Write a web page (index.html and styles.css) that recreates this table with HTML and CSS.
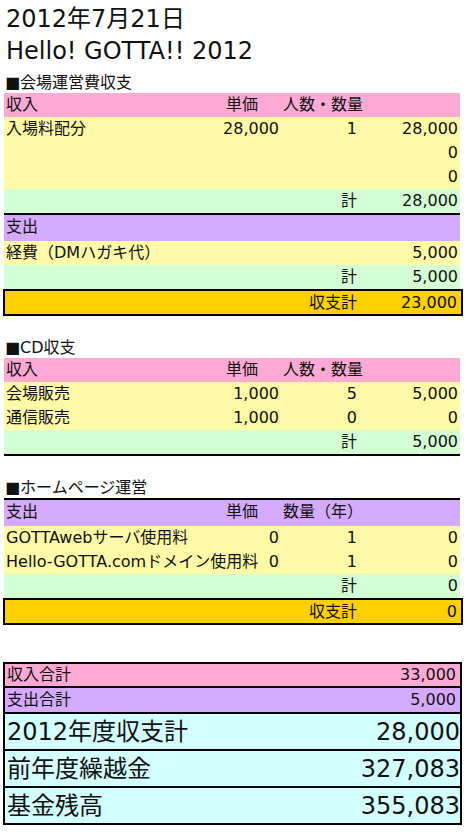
FILE: index.html
```html
<!DOCTYPE html>
<html lang="ja">
<head>
  <meta charset="UTF-8">
  <title>Hello! GOTTA!! 2012 収支報告</title>
  <link rel="stylesheet" href="styles.css">
</head>
<body>
  <div class="page">
    <div class="title">2012年7月21日</div>
    <div class="title">Hello! GOTTA!! 2012</div>

    <!-- 会場運営費 -->
    <h2 class="sheet-name first">■会場運営費収支</h2>
    <div class="sheet">
      <div class="row income">
        <span>収入</span><span class="price-head">単価</span><span>人数・数量</span><span></span>
      </div>
      <div class="row item">
        <span>入場料配分</span><span class="num">28,000</span><span class="num">1</span><span class="num">28,000</span>
      </div>
      <div class="row item">
        <span></span><span></span><span></span><span class="num">0</span>
      </div>
      <div class="row item">
        <span></span><span></span><span></span><span class="num">0</span>
      </div>
      <div class="row subtotal">
        <span></span><span></span><span class="num">計</span><span class="num">28,000</span>
      </div>
      <div class="row expense ruled">
        <span>支出</span><span></span><span></span><span></span>
      </div>
      <div class="row item">
        <span>経費（DMハガキ代）</span><span></span><span></span><span class="num">5,000</span>
      </div>
      <div class="row subtotal">
        <span></span><span></span><span class="num">計</span><span class="num">5,000</span>
      </div>
      <div class="row balance">
        <span></span><span></span><span class="num">収支計</span><span class="num">23,000</span>
      </div>
    </div>

    <!-- CD -->
    <h2 class="sheet-name">■CD収支</h2>
    <div class="sheet closed">
      <div class="row income">
        <span>収入</span><span class="price-head">単価</span><span>人数・数量</span><span></span>
      </div>
      <div class="row item">
        <span>会場販売</span><span class="num">1,000</span><span class="num">5</span><span class="num">5,000</span>
      </div>
      <div class="row item">
        <span>通信販売</span><span class="num">1,000</span><span class="num">0</span><span class="num">0</span>
      </div>
      <div class="row subtotal">
        <span></span><span></span><span class="num">計</span><span class="num">5,000</span>
      </div>
    </div>

    <!-- ホームページ -->
    <h2 class="sheet-name">■ホームページ運営</h2>
    <div class="sheet">
      <div class="row expense ruled">
        <span>支出</span><span class="price-head">単価</span><span>数量（年）</span><span></span>
      </div>
      <div class="row item">
        <span>GOTTAwebサーバ使用料</span><span class="num">0</span><span class="num">1</span><span class="num">0</span>
      </div>
      <div class="row item">
        <span>Hello-GOTTA.comドメイン使用料</span><span class="num">0</span><span class="num">1</span><span class="num">0</span>
      </div>
      <div class="row subtotal">
        <span></span><span></span><span class="num">計</span><span class="num">0</span>
      </div>
      <div class="row balance">
        <span></span><span></span><span class="num">収支計</span><span class="num">0</span>
      </div>
    </div>

    <!-- 合計 -->
    <div class="summary">
      <div class="sum-row income"><span>収入合計</span><span>33,000</span></div>
      <div class="sum-row expense"><span>支出合計</span><span>5,000</span></div>
      <div class="sum-row total"><span>2012年度収支計</span><span>28,000</span></div>
      <div class="sum-row total"><span>前年度繰越金</span><span>327,083</span></div>
      <div class="sum-row total"><span>基金残高</span><span>355,083</span></div>
    </div>
  </div>
</body>
</html>
```

FILE: styles.css
```css
body {
  margin: 0;
  background: #fff;
  color: #111;
  font-family: "DejaVu Sans", "Noto Sans CJK JP", sans-serif;
}
.page {
  width: 467px;
  padding-top: 3px;
}
.title {
  font-size: 24px;
  line-height: 32px;
  padding-left: 6px;
  white-space: nowrap;
}
.sheet-name {
  margin: 22px 0 0;
  padding-left: 5px;
  height: 20px;
  font-size: 16px;
  font-weight: normal;
  line-height: 20px;
}
.sheet-name.first {
  margin-top: 6px;
}
.sheet {
  margin-left: 4px;
  width: 456px;
}
.sheet.closed {
  border-bottom: 2px solid #000;
}
.row {
  display: grid;
  grid-template-columns: 196px 81px 78px 101px;
  height: 24px;
  font-size: 16px;
  line-height: 24px;
}
.row > span {
  min-width: 0;
  padding: 0 2px;
  white-space: nowrap;
}
.row .num {
  text-align: right;
}
.row .price-head {
  text-align: right;
  padding-right: 23px;
}
.row.ruled {
  height: 26px;
  border-top: 2px solid #000;
}
.income {
  background: #ffaad4;
}
.expense {
  background: #d4aaff;
}
.item {
  background: #fffaa8;
}
.subtotal {
  background: #d4ffd4;
}
.row.balance {
  height: 27px;
  width: 460px;
  margin-left: -1px;
  box-sizing: border-box;
  border: 2px solid #000;
  background: #ffd000;
  line-height: 23px;
  grid-template-columns: 195px 81px 78px 102px;
}
.row.balance > span:last-child {
  padding-right: 4px;
}
.summary {
  margin: 37px 0 0 3px;
  width: 459px;
  box-sizing: border-box;
  border: 2px solid #000;
}
.sum-row {
  display: flex;
  justify-content: space-between;
  white-space: nowrap;
}
.sum-row + .sum-row {
  border-top: 2px solid #000;
}
.sum-row.income,
.sum-row.expense {
  padding: 0 4px 0 2px;
  font-size: 16px;
}
.sum-row.income {
  height: 22px;
  line-height: 22px;
}
.sum-row.expense {
  height: 24px;
  line-height: 24px;
}
.sum-row.total {
  height: 35px;
  padding: 0 0 0 2px;
  background: #d4ffff;
  font-size: 24px;
  line-height: 37px;
}
```
